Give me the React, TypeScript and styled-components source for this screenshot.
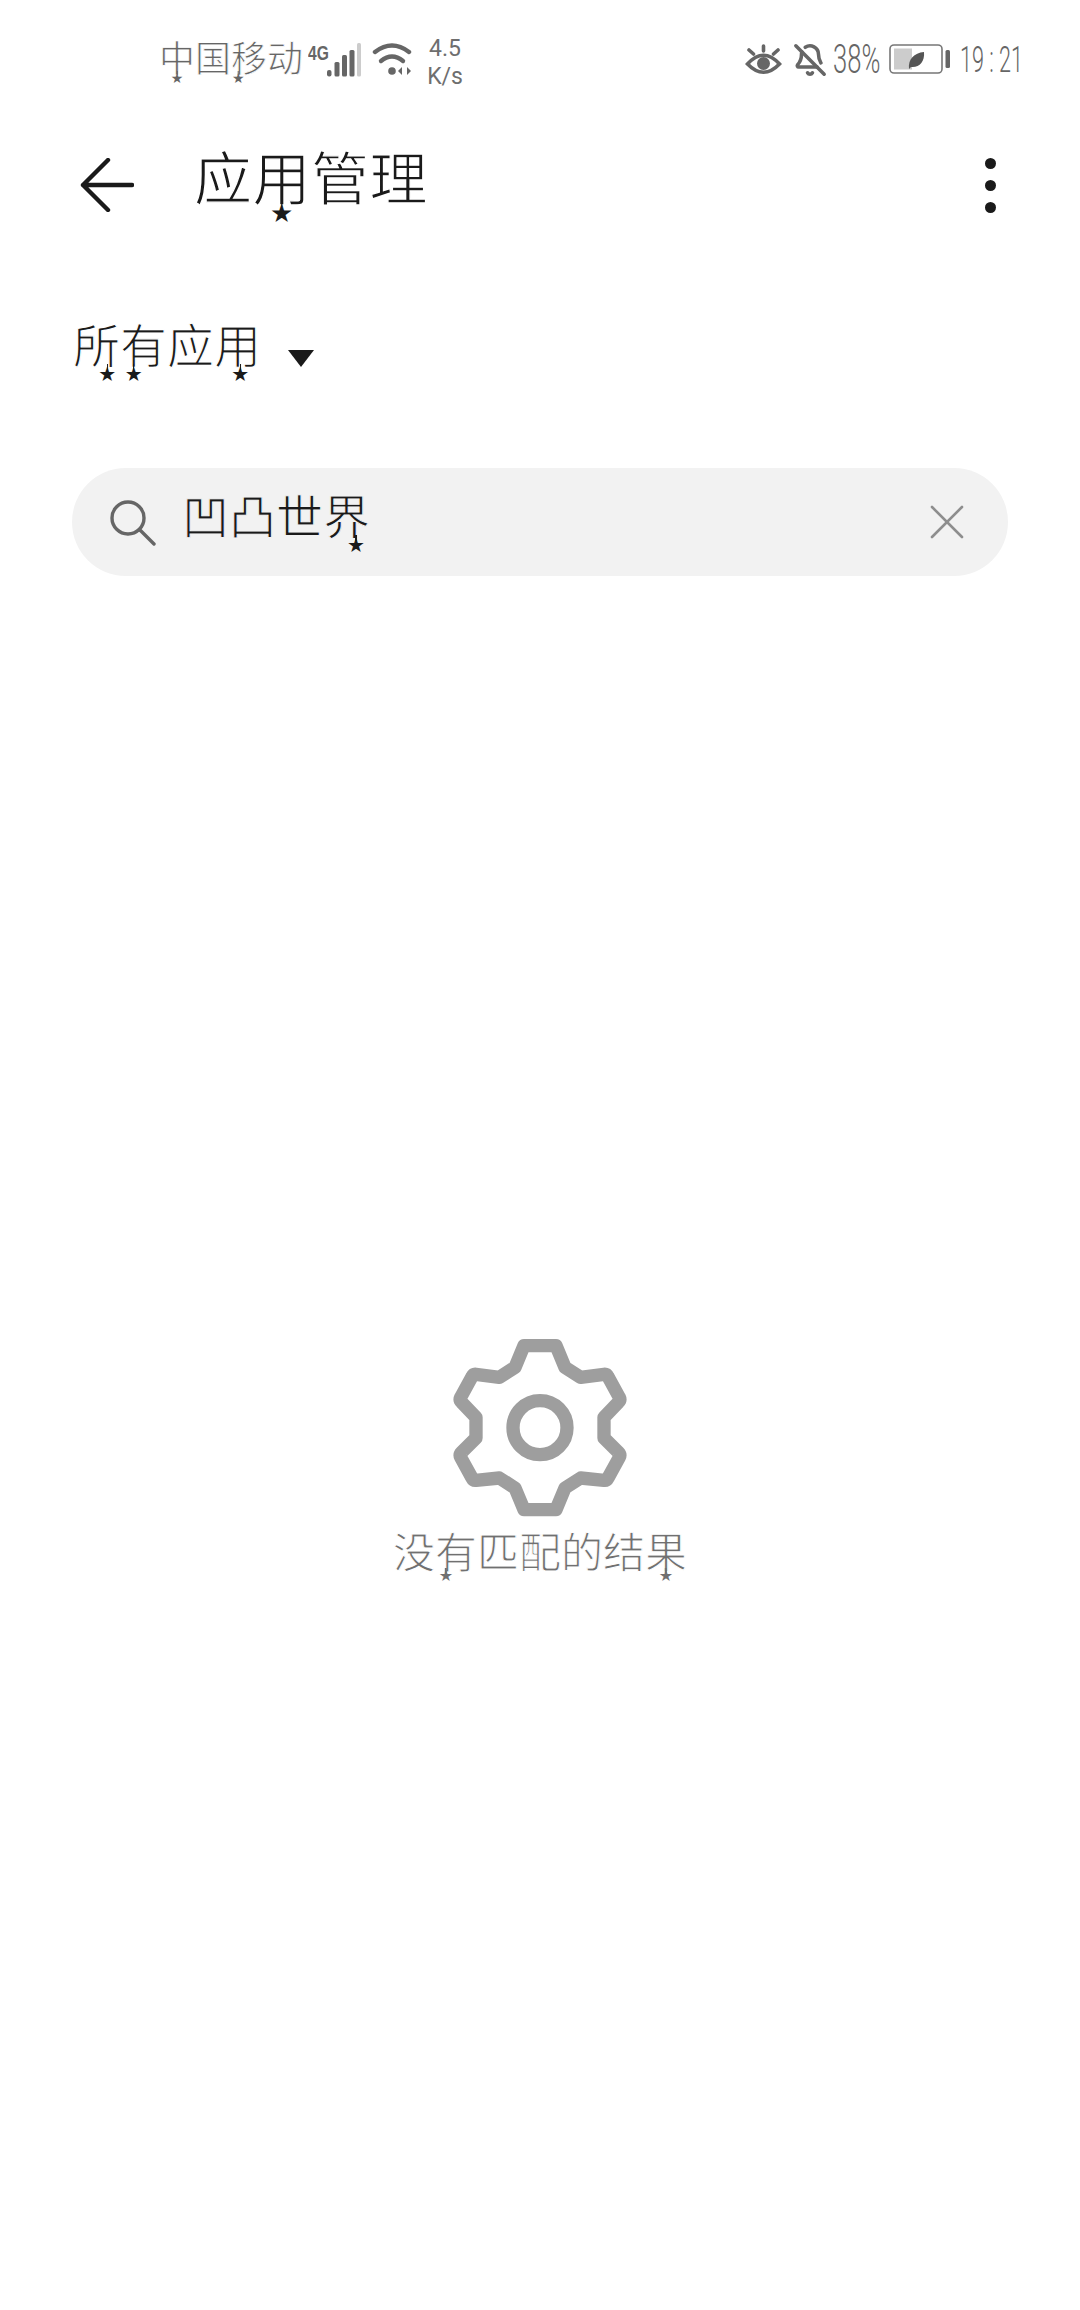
import React from "react";
import styled, { createGlobalStyle } from "styled-components";
import { BellOff } from "lucide-react";

const Global = createGlobalStyle`
  html, body { margin: 0; padding: 0; background: #fff; }
  body { font-family: "Noto Sans CJK SC", "Noto Sans", sans-serif; }
`;

const Page = styled.div`
  width: 1080px;
  height: 2310px;
  display: flex;
  flex-direction: column;
  background: #fff;
  overflow: hidden;
`;

const StatusBar = styled.div`
  height: 120px;
  display: flex;
  align-items: center;
  justify-content: space-between;
  padding: 0 62px 0 159px;
  color: #666;
`;

const StatusGroup = styled.div`
  display: flex;
  align-items: center;
`;

const Carrier = styled.div`
  margin-top: -6px;
`;

const Thin = styled.span<{ $size: number; $stroke: number; $paper?: string; $track?: number }>`
  display: inline-block;
  font-size: ${(p) => p.$size}px;
  line-height: 1;
  letter-spacing: ${(p) => p.$track ?? 0}px;
  white-space: nowrap;
  -webkit-text-stroke: ${(p) => p.$stroke}px ${(p) => p.$paper ?? "#fff"};
`;

const Glyph = styled.span`
  position: relative;
  display: inline-block;
`;

/* Each marked character carries a small star on a stem below its stroke. */
const Star = styled.i<{ $at: number; $size: number; $drop: number }>`
  position: absolute;
  left: ${(p) => p.$at}%;
  top: ${(p) => p.$drop}px;
  transform: translateX(-50%);
  font: normal ${(p) => p.$size}px/1 "DejaVu Sans", sans-serif;
  letter-spacing: 0;
  -webkit-text-stroke: 0;

  &::before {
    content: "";
    position: absolute;
    left: 50%;
    bottom: 70%;
    width: 1.5px;
    height: 30%;
    margin-left: -0.75px;
    background: currentColor;
  }
`;

const FourG = styled.span`
  display: inline-block;
  width: 19px;
  margin: -14px 0 0 5px;
  font: bold 20px/1 "Liberation Sans", sans-serif;
  transform: scaleX(0.78);
  transform-origin: left center;
  white-space: nowrap;
`;

const Speed = styled.div`
  width: 38px;
  margin: 6px 0 0 14px;
  text-align: center;
  font: 23px/28px "Roboto", "Liberation Sans", sans-serif;
  color: #6e6e6e;
  white-space: nowrap;
`;

const Squeezed = styled.span<{ $width: number; $size: number; $scale: number }>`
  display: inline-block;
  width: ${(p) => p.$width}px;
  font: 300 ${(p) => p.$size}px/1 "Roboto", "Liberation Sans", sans-serif;
  transform: scaleX(${(p) => p.$scale});
  transform-origin: left center;
  white-space: nowrap;
`;

const IconSlot = styled.span<{ $left: number }>`
  display: flex;
  margin-left: ${(p) => p.$left}px;
`;

const Header = styled.header`
  height: 130px;
  display: flex;
  align-items: center;
  padding: 0 0 0 80px;
  color: #1a1a1a;
`;

const Title = styled.h1`
  margin: -20px 0 0 60px;
  flex: 1;
  font-weight: 400;
  font-size: inherit;
`;

const Dots = styled.div`
  display: flex;
  flex-direction: column;
  gap: 11px;
  margin-right: 84px;
`;

const Dot = styled.span`
  width: 11px;
  height: 11px;
  border-radius: 50%;
  background: #1a1a1a;
`;

const Filter = styled.div`
  height: 194px;
  display: flex;
  align-items: center;
  padding-left: 73px;
  color: #1a1a1a;
`;

const FilterLabel = styled.div`
  margin-top: -8px;
`;

const Caret = styled.span`
  width: 0;
  height: 0;
  margin: 22px 0 0 27px;
  border-left: 13.5px solid transparent;
  border-right: 13.5px solid transparent;
  border-top: 17px solid #1a1a1a;
`;

const SearchBox = styled.div`
  height: 108px;
  margin: 24px 72px 0;
  padding: 0 44px 0 38px;
  display: flex;
  align-items: center;
  border-radius: 54px;
  background: #f2f2f2;
  color: #1a1a1a;
`;

const Lens = styled.svg`
  margin-top: 2px;
`;

const Query = styled.div`
  flex: 1;
  margin: -16px 0 0 26px;
`;

const Empty = styled.section`
  margin-top: 759px;
  display: flex;
  flex-direction: column;
  align-items: center;
  color: #707070;
`;

const EmptyText = styled.p`
  margin: 9px 0 0;
`;

type Char = { c: string; at?: number };

const Stars = ({ text, size, drop }: { text: Char[]; size: number; drop: number }) => (
  <>
    {text.map(({ c, at }, i) => (
      <Glyph key={i}>
        {c}
        {at !== undefined && (
          <Star $at={at} $size={size} $drop={drop}>
            ★
          </Star>
        )}
      </Glyph>
    ))}
  </>
);

const Signal = () => (
  <svg width="34" height="34" viewBox="0 0 34 34" fill="#666">
    <rect x="0" y="27" width="4.5" height="6.5" rx="2" />
    <rect x="7.5" y="19" width="5" height="14.5" rx="1.5" />
    <rect x="15" y="12" width="5" height="21.5" rx="1.5" />
    <rect x="22.5" y="7" width="5" height="26.5" rx="1.5" />
    <rect x="30" y="0" width="4" height="33.5" rx="1.5" fill="#ccc" />
  </svg>
);

const Wifi = () => (
  <svg width="40" height="36" viewBox="0 0 40 36" fill="none" stroke="#666" strokeWidth="4.4" strokeLinecap="round">
    <path d="M3 10 Q20 -3 37 10" />
    <path d="M9 19 Q20 10 31 19" />
    <circle cx="20" cy="29" r="3.8" fill="#666" stroke="none" />
    <path d="M30 25 L26 29 L30 33 Z M35 25 L39 29 L35 33 Z" fill="#666" stroke="none" />
  </svg>
);

const Eye = () => (
  <svg width="38" height="32" viewBox="0 0 38 32" fill="none" stroke="#666" strokeWidth="3.6" strokeLinecap="round">
    <path d="M18.5 2 V7 M4 6 L8.5 10 M33 6 L28.5 10" />
    <path d="M2.5 20 Q18.5 2.5 34.5 20 Q18.5 36.5 2.5 20 Z" />
    <circle cx="18.5" cy="19.5" r="6.5" fill="#666" stroke="none" />
  </svg>
);

const Battery = () => (
  <svg width="62" height="32" viewBox="0 0 62 32">
    <rect x="1" y="1" width="52" height="28" rx="4" fill="none" stroke="#777" strokeWidth="1.6" />
    <rect x="5" y="4.5" width="18" height="21" fill="#ccc" />
    <path d="M20 25 C19 15 25 9 35 8 C36 18 30 24 22 23 Z" fill="#555" />
    <rect x="56.5" y="6" width="4.5" height="18" rx="1.5" fill="#666" />
  </svg>
);

const BackArrow = () => (
  <svg width="54" height="54" viewBox="0 0 54 54" fill="none" stroke="#1a1a1a" strokeWidth="4.4" strokeLinecap="round" strokeLinejoin="round">
    <path d="M52 27 H3 M28 2 L3 27 L28 52" />
  </svg>
);

const Magnifier = () => (
  <Lens width="46" height="46" viewBox="0 0 46 46" fill="none" stroke="#666" strokeWidth="3.4" strokeLinecap="round">
    <circle cx="18" cy="18" r="16" />
    <path d="M30 30 L44 44" />
  </Lens>
);

const ClearMark = () => (
  <svg width="34" height="34" viewBox="0 0 34 34" fill="none" stroke="#8e8e8e" strokeWidth="2.6" strokeLinecap="round">
    <path d="M2 2 L32 32 M32 2 L2 32" />
  </svg>
);

const Gear = () => (
  <svg width="180" height="185" viewBox="210 45 540 555" fill="none" stroke="#9e9e9e" strokeWidth="40" strokeLinejoin="round">
    <path d="M432 77 H528 L555 142 L602 172 L672 163 Q680 162 684 170 L718 232 Q722 240 715 247 L672 292 V354 L715 397 Q722 404 718 412 L684 474 Q680 482 672 481 L602 474 L555 504 L528 569 H432 L405 504 L358 474 L288 481 Q280 482 276 474 L242 412 Q238 404 245 397 L288 354 V292 L245 247 Q238 240 242 232 L276 170 Q280 162 288 163 L358 172 L405 142 Z" />
    <circle cx="480" cy="323" r="81" />
  </svg>
);

export default function App() {
  return (
    <Page>
      <Global />
      <StatusBar>
        <StatusGroup>
          <Carrier>
            <Thin $size={36} $stroke={0.8}>
              <Stars text={[{ c: "中", at: 50 }, { c: "国" }, { c: "移", at: 20 }, { c: "动" }]} size={14} drop={33} />
            </Thin>
          </Carrier>
          <FourG>4G</FourG>
          <Signal />
          <IconSlot $left={11}>
            <Wifi />
          </IconSlot>
          <Speed>
            4.5
            <br />
            K/s
          </Speed>
        </StatusGroup>
        <StatusGroup>
          <IconSlot $left={0}>
            <Eye />
          </IconSlot>
          <IconSlot $left={10}>
            <BellOff size={34} strokeWidth={2.5} color="#666" />
          </IconSlot>
          <IconSlot $left={6}>
            <Squeezed $width={45} $size={40} $scale={0.64}>
              38%
            </Squeezed>
          </IconSlot>
          <IconSlot $left={11}>
            <Battery />
          </IconSlot>
          <IconSlot $left={9}>
            <Squeezed $width={58} $size={36} $scale={0.6}>
              19 : 21
            </Squeezed>
          </IconSlot>
        </StatusGroup>
      </StatusBar>

      <Header>
        <BackArrow />
        <Title>
          <Thin $size={58} $stroke={1.3} $track={0.5}>
            <Stars text={[{ c: "应" }, { c: "用", at: 50 }, { c: "管" }, { c: "理" }]} size={26} drop={54} />
          </Thin>
        </Title>
        <Dots>
          <Dot />
          <Dot />
          <Dot />
        </Dots>
      </Header>

      <Filter>
        <FilterLabel>
          <Thin $size={47} $stroke={1.2}>
            <Stars text={[{ c: "所", at: 73 }, { c: "有", at: 29 }, { c: "应" }, { c: "用", at: 56 }]} size={20} drop={45} />
          </Thin>
        </FilterLabel>
        <Caret />
      </Filter>

      <SearchBox>
        <Magnifier />
        <Query>
          <Thin $size={47} $stroke={1} $paper="#f2f2f2">
            <Stars text={[{ c: "凹" }, { c: "凸" }, { c: "世" }, { c: "界", at: 70 }]} size={20} drop={45} />
          </Thin>
        </Query>
        <ClearMark />
      </SearchBox>

      <Empty>
        <Gear />
        <EmptyText>
          <Thin $size={42} $stroke={1} $track={0}>
            <Stars
              text={[{ c: "没" }, { c: "有", at: 26 }, { c: "匹" }, { c: "配" }, { c: "的" }, { c: "结" }, { c: "果", at: 50 }]}
              size={16}
              drop={39}
            />
          </Thin>
        </EmptyText>
      </Empty>
    </Page>
  );
}
